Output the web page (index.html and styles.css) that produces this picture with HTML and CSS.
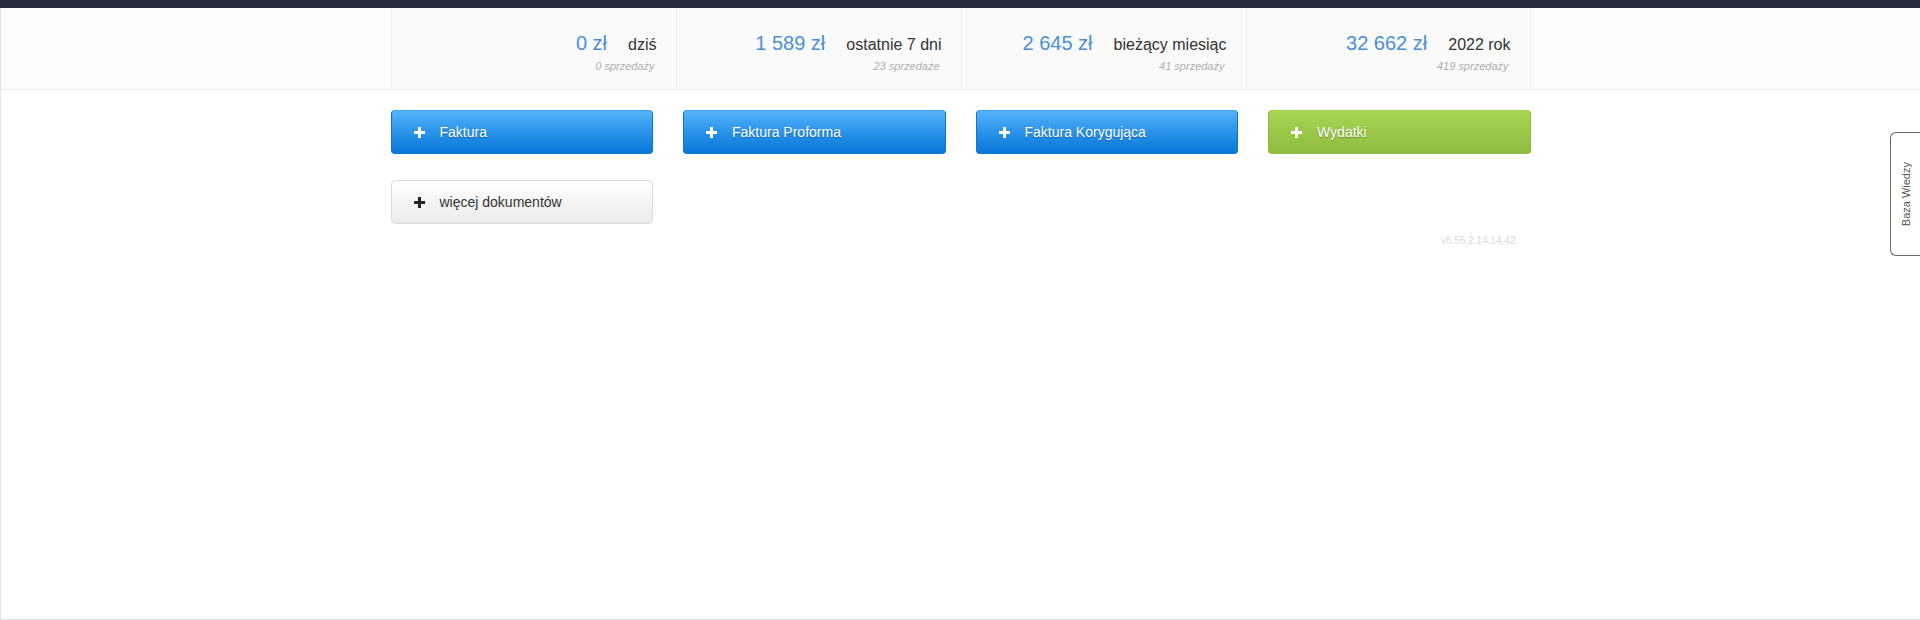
FILE: index.html
```html
<!DOCTYPE html>
<html lang="pl">
<head>
<meta charset="utf-8">
<title>Pulpit</title>
<link rel="stylesheet" href="styles.css">
</head>
<body>
<div class="topbar"></div>
<div class="page">
  <div class="stats">
    <div class="container stats-row">
      <div class="stat">
        <div class="stat-main"><span class="stat-value">0 zł</span><span class="stat-label">dziś</span></div>
        <div class="stat-sub">0 sprzedaży</div>
      </div>
      <div class="stat">
        <div class="stat-main"><span class="stat-value">1 589 zł</span><span class="stat-label">ostatnie 7 dni</span></div>
        <div class="stat-sub">23 sprzedaże</div>
      </div>
      <div class="stat">
        <div class="stat-main"><span class="stat-value">2 645 zł</span><span class="stat-label">bieżący miesiąc</span></div>
        <div class="stat-sub">41 sprzedaży</div>
      </div>
      <div class="stat">
        <div class="stat-main"><span class="stat-value">32 662 zł</span><span class="stat-label">2022 rok</span></div>
        <div class="stat-sub">419 sprzedaży</div>
      </div>
    </div>
  </div>
  <div class="container">
    <div class="actions">
      <a class="btn btn-blue"><svg class="plus" viewBox="0 0 11 11"><path d="M4 0h3v4h4v3H7v4H4V7H0V4h4z"/></svg>Faktura</a>
      <a class="btn btn-blue"><svg class="plus" viewBox="0 0 11 11"><path d="M4 0h3v4h4v3H7v4H4V7H0V4h4z"/></svg>Faktura Proforma</a>
      <a class="btn btn-blue"><svg class="plus" viewBox="0 0 11 11"><path d="M4 0h3v4h4v3H7v4H4V7H0V4h4z"/></svg>Faktura Korygująca</a>
      <a class="btn btn-green"><svg class="plus" viewBox="0 0 11 11"><path d="M4 0h3v4h4v3H7v4H4V7H0V4h4z"/></svg>Wydatki</a>
      <a class="btn btn-grey"><svg class="plus" viewBox="0 0 11 11"><path d="M4 0h3v4h4v3H7v4H4V7H0V4h4z"/></svg>więcej dokumentów</a>
    </div>
    <div class="version">v6.55.2.14.14.42</div>
  </div>
</div>
<div class="kb-tab"><span class="kb-text">Baza Wiedzy</span></div>
</body>
</html>
```
FILE: styles.css
```css
* { box-sizing: border-box; }
html, body { margin: 0; padding: 0; }
body {
  font-family: "Liberation Sans", Arial, sans-serif;
  color: #333;
  background: #fff;
  overflow: hidden;
}
.topbar {
  height: 8px;
  background: #272d3a;
}
.page {
  height: 612px;
  border-left: 1px solid #dce3ea;
  border-bottom: 1px solid #dce3ea;
}
.container {
  width: 1140px;
  margin: 0 auto;
}
.stats {
  background: #fcfcfc;
  border-bottom: 1px solid #ececec;
}
.stats-row {
  display: grid;
  grid-template-columns: repeat(4, 1fr);
}
.stat {
  background: #fafafa;
  border-left: 1px solid #f0f0f0;
  padding: 23px 19px 16px 0;
  text-align: right;
}
.stat:last-child { border-right: 1px solid #f0f0f0; }
.stat-main {
  line-height: 24px;
  white-space: nowrap;
}
.stat-value {
  font-size: 20px;
  color: #4b8fd8;
}
.stat-label {
  font-size: 16px;
  color: #333;
  margin-left: 21px;
}
.stat-sub {
  margin-top: 2px;
  font-size: 11px;
  line-height: 14px;
  font-style: italic;
  color: #b0b0b0;
  padding-right: 2px;
}
.actions {
  display: grid;
  grid-template-columns: repeat(4, 1fr);
  column-gap: 30px;
  row-gap: 26px;
  padding-top: 20px;
}
.btn {
  display: flex;
  align-items: center;
  height: 44px;
  padding-left: 22px;
  border-radius: 4px;
  font-size: 14px;
  color: #fff;
  text-shadow: 0 1px 1px rgba(0, 0, 0, 0.3);
  cursor: pointer;
}
.plus {
  width: 11px;
  height: 11px;
  margin-right: 15px;
  fill: currentColor;
  flex: none;
}
.btn-blue {
  background: linear-gradient(to bottom, #55b3fa 0%, #2a93ea 50%, #0877d7 100%);
  border: 1px solid #1077cf;
  border-top-color: #3ea3f0;
}
.btn-green {
  background: linear-gradient(to bottom, #a8d553 0%, #9cc84a 50%, #90bd40 100%);
  border: 1px solid #8cb840;
  border-top-color: #a3d04f;
}
.btn-grey {
  background: linear-gradient(to bottom, #ffffff 0%, #f4f4f4 50%, #eaeaea 100%);
  border: 1px solid #dcdcdc;
  color: #333;
  text-shadow: none;
}
.btn-grey .plus { fill: #222; }
.version {
  margin-top: 11px;
  padding-right: 15px;
  text-align: right;
  font-size: 10px;
  color: #d9d9d9;
}
.kb-tab {
  position: fixed;
  right: 0;
  top: 132px;
  width: 30px;
  height: 124px;
  background: #fff;
  border: 1px solid #666;
  border-right: none;
  border-radius: 6px 0 0 6px;
  display: flex;
  align-items: center;
  justify-content: center;
}
.kb-text {
  writing-mode: vertical-rl;
  transform: rotate(180deg);
  font-size: 11px;
  color: #555;
  white-space: nowrap;
}
```
